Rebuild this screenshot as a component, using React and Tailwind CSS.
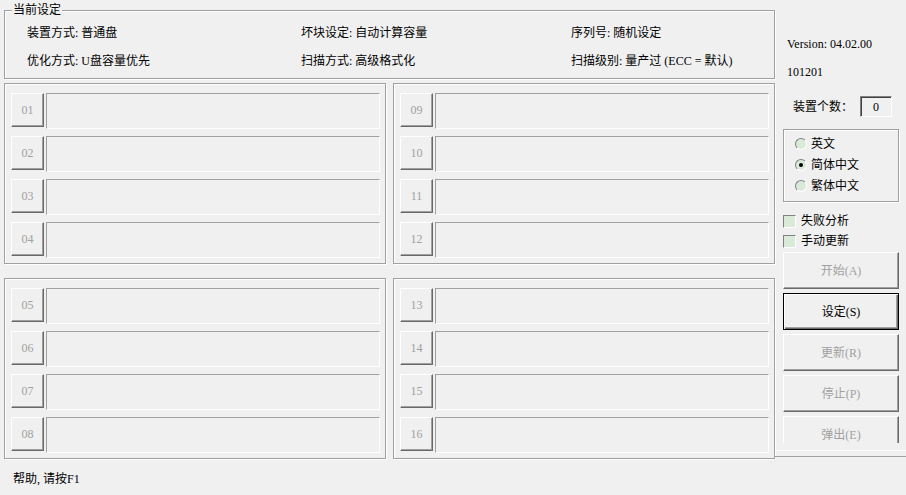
import React from "react";

const etched = "border border-[#a0a0a0] shadow-[inset_1px_1px_0_#fff,1px_1px_0_#fff]";

const SlotRow = ({ num }) => (
  <div className="flex items-start gap-[2px] h-[36px]">
    <div className="w-[33px] h-[34px] flex items-center justify-center border border-t-white border-l-white border-b-[#696969] border-r-[#696969] shadow-[inset_-1px_-1px_0_#a0a0a0] text-[#a0a0a0] text-[12px]">
      {num}
    </div>
    <div className="w-[334px] h-[36px] border border-t-[#a0a0a0] border-l-[#a0a0a0] border-b-white border-r-white" />
  </div>
);

const SlotGroup = ({ from }) => (
  <div className={`w-[382px] h-[181px] pl-[6px] pt-[9px] flex flex-col gap-[7px] ${etched}`}>
    {[0, 1, 2, 3].map((i) => (
      <SlotRow key={i} num={String(from + i).padStart(2, "0")} />
    ))}
  </div>
);

const Radio = ({ label, checked }) => (
  <div className="flex items-center gap-[4px] h-[21px] pl-[11px]">
    <span className="w-[12px] h-[12px] rounded-full bg-[#d9ead9] border border-t-[#808080] border-l-[#808080] border-b-white border-r-white flex items-center justify-center">
      {checked && <span className="w-[4px] h-[4px] rounded-full bg-black" />}
    </span>
    <span>{label}</span>
  </div>
);

const Check = ({ label }) => (
  <div className="flex items-center gap-[5px] h-[20px]">
    <span className="w-[13px] h-[13px] bg-[#d9ead9] border border-t-[#808080] border-l-[#808080] border-b-white border-r-white" />
    <span>{label}</span>
  </div>
);

const ActionButton = ({ label, active }) => (
  <div
    className={
      active
        ? "w-[116px] h-[37px] shrink-0 flex items-center justify-center border border-black shadow-[inset_1px_1px_0_#fff,inset_-1px_-1px_0_#696969,inset_-2px_-2px_0_#a0a0a0] text-black"
        : "w-[116px] h-[37px] shrink-0 flex items-center justify-center border border-t-white border-l-white border-b-[#696969] border-r-[#696969] shadow-[inset_-1px_-1px_0_#a0a0a0] text-[#a0a0a0]"
    }
  >
    {label}
  </div>
);

export default function App() {
  return (
    <div className="w-[906px] h-[495px] bg-[#f0f0f0] overflow-hidden text-[12px] leading-[14px] text-black font-['Liberation_Serif','Noto_Sans_CJK_SC',serif]">
      <div className="flex h-[458px]">
        {/* left: settings + slots */}
        <div className="w-[775px] pl-[4px] pt-[10px]">
          <div className={`relative w-[771px] h-[69px] pl-[22px] pt-[15px] ${etched}`}>
            <span className="absolute -top-[8px] left-[7px] px-[1px] bg-[#f0f0f0]">当前设定</span>
            <div className="grid grid-cols-[274px_270px_1fr] gap-y-[14px]">
              <span>装置方式: 普通盘</span>
              <span>坏块设定: 自动计算容量</span>
              <span>序列号: 随机设定</span>
              <span>优化方式: U盘容量优先</span>
              <span>扫描方式: 高级格式化</span>
              <span>扫描级别: 量产过 (ECC = 默认)</span>
            </div>
          </div>
          <div className="mt-[4px] grid grid-cols-[382px_382px] gap-x-[7px] gap-y-[14px]">
            <SlotGroup from={1} />
            <SlotGroup from={9} />
            <SlotGroup from={5} />
            <SlotGroup from={13} />
          </div>
        </div>

        {/* right: info + controls */}
        <div className="w-[131px] flex flex-col">
          <div className="h-[443px] shrink-0 overflow-hidden pl-[8px] pt-[37px]">
            <div className="pl-[4px]">Version: 04.02.00</div>
            <div className="pl-[4px] mt-[14px]">101201</div>
            <div className="mt-[17px] h-[21px] flex items-center">
              <span className="pl-[10px] w-[77px]">装置个数：</span>
              <span className="w-[32px] h-[21px] flex items-center justify-center border border-t-[#808080] border-l-[#808080] border-b-white border-r-white shadow-[inset_1px_1px_0_#404040]">
                0
              </span>
            </div>
            <div className={`mt-[12px] w-[116px] h-[73px] pt-[3px] ${etched}`}>
              <Radio label="英文" />
              <Radio label="简体中文" checked />
              <Radio label="繁体中文" />
            </div>
            <div className="mt-[9px]">
              <Check label="失败分析" />
              <Check label="手动更新" />
            </div>
            <div className="mt-[1px] flex flex-col gap-[4px]">
              <ActionButton label="开始(A)" />
              <ActionButton label="设定(S)" active />
              <ActionButton label="更新(R)" />
              <ActionButton label="停止(P)" />
              <ActionButton label="弹出(E)" />
            </div>
          </div>
          <div className="mt-[7px] h-px bg-white" />
          <div className="mt-[5px] h-px bg-[#a0a0a0]" />
        </div>
      </div>

      {/* status bar */}
      <div className="pl-[13px] pt-[14px]">帮助, 请按F1</div>
    </div>
  );
}
